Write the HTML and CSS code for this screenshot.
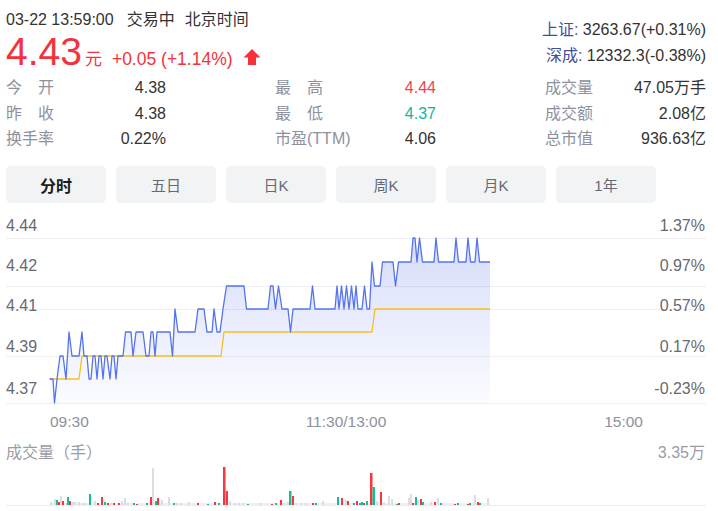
FILE: index.html
```html
<!DOCTYPE html>
<html lang="zh-CN">
<head>
<meta charset="utf-8">
<title>分时</title>
<link rel="stylesheet" href="styles.css">
</head>
<body>
<div class="page">
  <header class="head">
    <div class="head-left">
      <div class="ts"><span>03-22 13:59:00</span><span class="ts-status">交易中</span><span class="ts-zone">北京时间</span></div>
      <div class="price-row"><span class="price">4.43</span><span class="unit">元</span><span class="chg">+0.05 (+1.14%)</span><svg class="arrow" width="18" height="16" viewBox="0 0 18 16"><polygon points="9,0 17.5,8.5 13,8.5 13,16 5,16 5,8.5 0.5,8.5" fill="#f5323b"/></svg></div>
    </div>
    <div class="head-right">
      <div class="idx"><span class="idx-name">上证:</span> 3263.67(+0.31%)</div>
      <div class="idx"><span class="idx-name">深成:</span> 12332.3(-0.38%)</div>
    </div>
  </header>

  <section class="stats">
    <div class="stat"><span class="k">今　开</span><span class="v">4.38</span></div>
    <div class="stat"><span class="k">最　高</span><span class="v up">4.44</span></div>
    <div class="stat"><span class="k">成交量</span><span class="v">47.05万手</span></div>
    <div class="stat"><span class="k">昨　收</span><span class="v">4.38</span></div>
    <div class="stat"><span class="k">最　低</span><span class="v down">4.37</span></div>
    <div class="stat"><span class="k">成交额</span><span class="v">2.08亿</span></div>
    <div class="stat"><span class="k">换手率</span><span class="v">0.22%</span></div>
    <div class="stat"><span class="k">市盈(TTM)</span><span class="v">4.06</span></div>
    <div class="stat"><span class="k">总市值</span><span class="v">936.63亿</span></div>
  </section>

  <nav class="tabs">
    <div class="tab active">分时</div>
    <div class="tab">五日</div>
    <div class="tab">日K</div>
    <div class="tab">周K</div>
    <div class="tab">月K</div>
    <div class="tab">1年</div>
  </nav>

  <svg class="chart" width="700" height="308" viewBox="6 203 700 308">
    <defs>
      <linearGradient id="fillg" gradientUnits="userSpaceOnUse" x1="0" y1="238" x2="0" y2="403">
        <stop offset="0" stop-color="#5470ee" stop-opacity="0.24"/>
        <stop offset="1" stop-color="#5470ee" stop-opacity="0.02"/>
      </linearGradient>
    </defs>
    <g class="grid">
      <line x1="6" y1="238.5" x2="706" y2="238.5"/>
      <line x1="6" y1="286.5" x2="706" y2="286.5"/>
      <line x1="6" y1="309.5" x2="706" y2="309.5"/>
      <line x1="6" y1="356.5" x2="706" y2="356.5"/>
      <line x1="6" y1="403.5" x2="706" y2="403.5"/>
      <line x1="6" y1="505.5" x2="706" y2="505.5"/>
    </g>
    <g class="ylab">
      <text x="6" y="230.5">4.44</text>
      <text x="6" y="271">4.42</text>
      <text x="6" y="310.5">4.41</text>
      <text x="6" y="352">4.39</text>
      <text x="6" y="393.5">4.37</text>
    </g>
    <g class="ylab right">
      <text x="705" y="230.5">1.37%</text>
      <text x="705" y="271">0.97%</text>
      <text x="705" y="310.5">0.57%</text>
      <text x="705" y="352">0.17%</text>
      <text x="705" y="393.5">-0.23%</text>
    </g>
    <polygon class="area" points="50,379 53,379 54.5,403 57,379 60,356 63,356 66,379 69,332 72,356 79,356 82,332 84,356 87,356 89,379 91,379 93,356 95,356 97,379 99,356 101,356 103,379 105,356 107,356 110,379 112,356 114,356 116,379 118,356 123,356 125.5,332 131,332 133,356 136,332 143,332 146,356 149,356 151,332 153,332 155,356 157,332 170,332 172.5,356 175,309 178,332 195,332 198,309 204,309 207,332 212,332 214,309 217,332 220,332 223,309 226.5,286 244,286 246.5,309 268,309 270.5,286 273,286 275.5,309 278.5,286 282,309 288,309 290.5,332 293,309 310,309 312.5,286 315,309 335,309 337,286 339,309 341.5,286 344,309 346.5,286 349,309 351.5,286 354,309 356,286 358,309 362,309 364.5,286 367,309 369.5,309 372,262 374.5,286 380,286 382.5,262 393,262 395.5,286 398.5,262 411,262 413,238 415,238 417,262 419.5,238 422.5,262 434,262 436,238 438.5,262 454,262 456,238 458.5,262 466,262 468,238 470.5,262 475,262 477,238 479.5,262 490,262 490,403 50,403"/>
    <polyline class="avg" points="49,379 79,379 82,356 221,356 224,332 372,332 375,309 490,309"/>
    <polyline class="price-line" points="50,379 53,379 54.5,403 57,379 60,356 63,356 66,379 69,332 72,356 79,356 82,332 84,356 87,356 89,379 91,379 93,356 95,356 97,379 99,356 101,356 103,379 105,356 107,356 110,379 112,356 114,356 116,379 118,356 123,356 125.5,332 131,332 133,356 136,332 143,332 146,356 149,356 151,332 153,332 155,356 157,332 170,332 172.5,356 175,309 178,332 195,332 198,309 204,309 207,332 212,332 214,309 217,332 220,332 223,309 226.5,286 244,286 246.5,309 268,309 270.5,286 273,286 275.5,309 278.5,286 282,309 288,309 290.5,332 293,309 310,309 312.5,286 315,309 335,309 337,286 339,309 341.5,286 344,309 346.5,286 349,309 351.5,286 354,309 356,286 358,309 362,309 364.5,286 367,309 369.5,309 372,262 374.5,286 380,286 382.5,262 393,262 395.5,286 398.5,262 411,262 413,238 415,238 417,262 419.5,238 422.5,262 434,262 436,238 438.5,262 454,262 456,238 458.5,262 466,262 468,238 470.5,262 475,262 477,238 479.5,262 490,262"/>
    <g class="xlab">
      <text x="50" y="427">09:30</text>
      <text x="346" y="427" text-anchor="middle">11:30/13:00</text>
      <text x="643" y="427" text-anchor="end">15:00</text>
    </g>
    <text class="vlab" x="6" y="458">成交量（手）</text>
    <text class="vlab" x="705" y="458" text-anchor="end">3.35万</text>
    <rect class="vbase" x="50" y="503" width="440" height="2"/>
    <g class="vg">
      <rect x="50" y="502" width="2" height="3"/><rect x="54" y="499" width="2" height="6"/><rect x="60" y="496" width="2" height="9"/>
      <rect x="65" y="503" width="2" height="2"/><rect x="72" y="502" width="2" height="3"/><rect x="74" y="502" width="2" height="3"/>
      <rect x="78" y="502" width="2" height="3"/><rect x="82" y="503" width="2" height="2"/><rect x="85" y="503" width="2" height="2"/>
      <rect x="94" y="501" width="2" height="4"/><rect x="110" y="503" width="2" height="2"/><rect x="121" y="501" width="2" height="4"/>
      <rect x="124" y="498" width="2" height="7"/><rect x="127" y="503" width="2" height="2"/><rect x="152" y="468" width="2" height="37"/>
      <rect x="161" y="500" width="2" height="5"/><rect x="168" y="497" width="2" height="8"/><rect x="176" y="503" width="2" height="2"/>
      <rect x="180" y="503" width="2" height="2"/><rect x="188" y="502" width="2" height="3"/><rect x="229" y="501" width="2" height="4"/>
      <rect x="234" y="503" width="2" height="2"/><rect x="238" y="503" width="2" height="2"/><rect x="242" y="503" width="2" height="2"/>
      <rect x="260" y="503" width="2" height="2"/><rect x="283" y="503" width="2" height="2"/><rect x="287" y="502" width="2" height="3"/>
      <rect x="295" y="503" width="2" height="2"/><rect x="300" y="503" width="2" height="2"/><rect x="305" y="503" width="2" height="2"/>
      <rect x="322" y="501" width="2" height="4"/><rect x="345" y="500" width="2" height="5"/><rect x="376" y="501" width="2" height="4"/>
      <rect x="383" y="502" width="2" height="3"/><rect x="388" y="496" width="2" height="9"/><rect x="391" y="499" width="2" height="6"/>
      <rect x="408" y="498" width="2" height="7"/><rect x="410" y="494" width="2" height="11"/><rect x="417" y="500" width="2" height="5"/>
      <rect x="430" y="502" width="2" height="3"/><rect x="437" y="498" width="2" height="7"/><rect x="474" y="495" width="2" height="10"/>
      <rect x="487" y="498" width="2" height="7"/>
    </g>
    <g class="vr">
      <rect x="58" y="502" width="2" height="3"/><rect x="62" y="501" width="2" height="4"/><rect x="69" y="501" width="2" height="4"/>
      <rect x="97" y="503" width="2" height="2"/><rect x="101" y="497" width="2" height="8"/><rect x="107" y="503" width="2" height="2"/>
      <rect x="113" y="503" width="2" height="2"/><rect x="118" y="503" width="2" height="2"/><rect x="136" y="504" width="2" height="1"/>
      <rect x="150" y="497" width="2" height="8"/><rect x="157" y="498" width="2" height="7"/><rect x="197" y="503" width="2" height="2"/>
      <rect x="214" y="502" width="2" height="3"/><rect x="223" y="467" width="2.5" height="38"/><rect x="226" y="491" width="2" height="14"/>
      <rect x="271" y="504" width="2" height="1"/><rect x="280" y="500" width="2" height="5"/><rect x="292" y="496" width="2" height="9"/>
      <rect x="312" y="503" width="2" height="2"/><rect x="341" y="498" width="2" height="7"/><rect x="347" y="501" width="2" height="4"/>
      <rect x="356" y="501" width="2" height="4"/><rect x="363" y="503" width="2" height="2"/><rect x="370" y="473" width="2.5" height="32"/>
      <rect x="380" y="492" width="2" height="13"/><rect x="398" y="503" width="2" height="2"/><rect x="412" y="503" width="2" height="2"/>
      <rect x="420" y="499" width="2" height="6"/><rect x="434" y="502" width="2" height="3"/><rect x="454" y="504" width="2" height="1"/>
      <rect x="467" y="504" width="2" height="1"/><rect x="477" y="502" width="2" height="3"/>
    </g>
    <g class="vgr">
      <rect x="56" y="500" width="2" height="5"/><rect x="67" y="497" width="2" height="8"/><rect x="89" y="494" width="2" height="11"/>
      <rect x="104" y="502" width="2" height="3"/><rect x="133" y="503" width="2" height="2"/><rect x="146" y="503" width="2" height="2"/>
      <rect x="155" y="501" width="2" height="4"/><rect x="173" y="503" width="2" height="2"/><rect x="207" y="504" width="2" height="1"/>
      <rect x="218" y="503" width="2" height="2"/><rect x="247" y="504" width="2" height="1"/><rect x="275" y="503" width="2" height="2"/>
      <rect x="289" y="491" width="2.5" height="14"/><rect x="315" y="503" width="2" height="2"/><rect x="337" y="497" width="2" height="8"/>
      <rect x="353" y="503" width="2" height="2"/><rect x="359" y="503" width="2" height="2"/><rect x="361" y="502" width="2" height="3"/>
      <rect x="366" y="501" width="2" height="4"/><rect x="372.5" y="487" width="2.5" height="18"/><rect x="396" y="504" width="2" height="1"/>
      <rect x="415" y="497" width="2" height="8"/><rect x="422" y="502" width="2" height="3"/><rect x="440" y="503" width="2" height="2"/>
      <rect x="457" y="503" width="2" height="2"/><rect x="469" y="503" width="2" height="2"/><rect x="479" y="503" width="2" height="2"/>
    </g>
  </svg>
</div>
</body>
</html>
```
FILE: styles.css
```css
* { box-sizing: border-box; }
html, body { margin: 0; padding: 0; background: #fff; }
body {
  width: 718px;
  height: 511px;
  overflow: hidden;
  font-family: "Liberation Sans", "Noto Sans CJK SC", sans-serif;
  color: #333;
}
.page { padding: 0 12px 0 6px; }

.head { display: flex; justify-content: space-between; align-items: flex-start; }
.head-left { padding-top: 10px; }
.ts { font-size: 16px; line-height: 20px; color: #333; white-space: nowrap; }
.ts-status { margin-left: 13px; }
.ts-zone { margin-left: 10px; }

.price-row { margin-top: 1.5px; font-size: 39px; line-height: 36px; height: 36px; white-space: nowrap; color: #f5323b; }
.price { line-height: 1; }
.unit { font-size: 17px; line-height: 1; margin-left: 3px; }
.chg { font-size: 17.5px; line-height: 1; margin-left: 10px; }
.arrow { display: inline-block; vertical-align: baseline; margin-left: 10px; }

.head-right { padding-top: 17px; font-size: 16px; line-height: 25.5px; text-align: right; color: #333; white-space: nowrap; }
.idx-name { color: #44509a; }

.stats {
  margin-top: 7px;
  display: grid;
  grid-template-columns: 160px 161px 161px;
  column-gap: 109px;
  grid-auto-rows: 25.5px;
  font-size: 16px;
  line-height: 25.5px;
}
.stat { display: flex; justify-content: space-between; white-space: nowrap; }
.stat .k { color: #8e919c; }
.stat .v { color: #333; }
.stat .v.up { color: #f3424b; }
.stat .v.down { color: #14b598; }

.tabs { margin-top: 14.5px; display: flex; gap: 10px; }
.tab {
  width: 100px;
  height: 37px;
  border-radius: 5px;
  background: #f2f3f5;
  display: flex;
  align-items: center;
  justify-content: center;
  font-size: 15px;
  color: #666a73;
}
.tab.active { font-size: 16px; font-weight: bold; color: #1a1a1a; }

.chart { display: block; }
.chart text { font-family: "Liberation Sans", "Noto Sans CJK SC", sans-serif; }
.grid line { stroke: #eeeef0; stroke-width: 1; }
.ylab text { font-size: 16px; fill: #666a70; }
.ylab.right text { text-anchor: end; }
.xlab text { font-size: 15.5px; fill: #8e919c; }
.vlab { font-size: 16px; fill: #9a9ca6; }
.area { fill: url(#fillg); stroke: none; }
.avg { fill: none; stroke: #f8bf22; stroke-width: 1.3; stroke-linejoin: round; }
.price-line { fill: none; stroke: #5673ee; stroke-width: 1.3; stroke-linejoin: round; }
.vbase { fill: #eef0f4; }
.vg rect { fill: #dcdde4; }
.vr rect { fill: #f7373d; }
.vgr rect { fill: #15bf93; }
```
